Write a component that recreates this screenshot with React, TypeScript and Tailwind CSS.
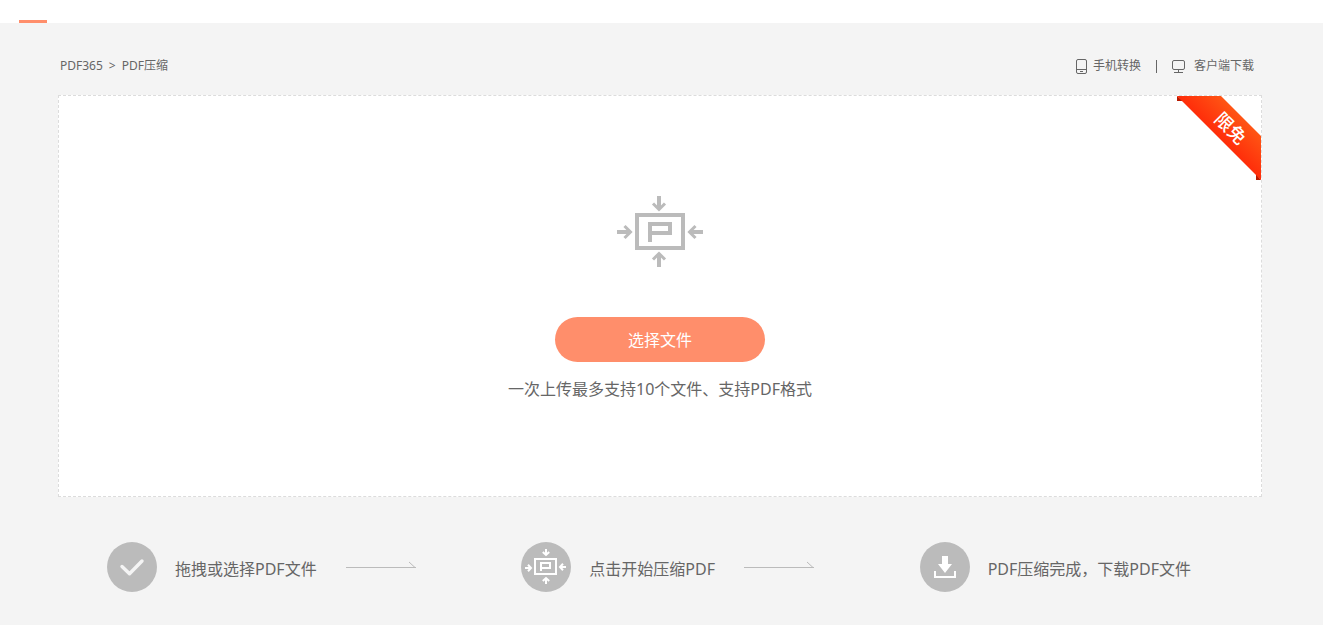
import type { ReactNode } from 'react';

function CompressIcon({ className }: { className: string }) {
  return (
    <svg viewBox="0 0 88 72" className={className} fill="none" stroke="currentColor" strokeWidth="4" aria-hidden="true">
      <rect x="21" y="19" width="46" height="33" />
      <path d="M34 46V28H54V37H36" />
      <path d="M43 0V12M43 71V59M1 36H13M87 36H75" />
      <path
        d="M37 7.500L43 13.500L49 7.500M37 63.500L43 57.500L49 63.500M8.500 30L14.500 36L8.500 42M79.500 30L73.500 36L79.500 42"
        strokeWidth="3"
      />
    </svg>
  );
}

function SmallCompressIcon() {
  return (
    <svg viewBox="0 0 50 50" className="size-[50px]" fill="none" stroke="#fff" strokeWidth="2" aria-hidden="true">
      <rect x="14" y="17" width="21" height="15" />
      <path d="M20 29V21H29V26H21" />
      <path d="M25 7V13M21.800 10L25 13L28.200 10" />
      <path d="M25 42V36M21.800 39L25 36L28.200 39" />
      <path d="M4 26H10M7 22.800L10 26L7 29.200" />
      <path d="M45 25H39M42 21.800L39 25L42 28.200" />
    </svg>
  );
}

function CheckIcon() {
  return (
    <svg viewBox="0 0 50 50" className="size-[50px]" fill="none" stroke="#f4f4f4" strokeWidth="3.400" aria-hidden="true">
      <path d="M15 24.500L22.500 31.800L35 19" strokeLinejoin="round" strokeLinecap="round" />
    </svg>
  );
}

function DownloadIcon() {
  return (
    <svg viewBox="0 0 50 50" className="size-[50px]" fill="#fff" aria-hidden="true">
      <path d="M22 14H28V22H32L25 31L18 22H22Z" />
      <path d="M14 29H16V34H34V29H36V36H14Z" />
    </svg>
  );
}

function Arrow() {
  return (
    <svg viewBox="0 0 70 12" className="h-3 w-[70px] shrink-0" fill="none" stroke="#bbb" aria-hidden="true">
      <path d="M0 6.500H70M63 1L69 6.500" />
    </svg>
  );
}

function Step({ icon, children }: { icon: ReactNode; children: ReactNode }) {
  return (
    <div className="flex items-center gap-[18px]">
      <span className="size-[50px] shrink-0 rounded-full bg-[#bbb]">{icon}</span>
      <span className="pt-1 whitespace-nowrap">{children}</span>
    </div>
  );
}

function Ribbon() {
  return (
    <div className="absolute top-0 right-0 size-[84px]">
      <svg viewBox="0 0 84 84" className="size-full" aria-hidden="true">
        <defs>
          <linearGradient id="ribbon" x1="42" y1="42" x2="64" y2="20" gradientUnits="userSpaceOnUse">
            <stop offset="0" stopColor="#ff2d0a" />
            <stop offset="1" stopColor="#ff5514" />
          </linearGradient>
        </defs>
        <path d="M0 0V5H6L0 0ZM79 78V84H84Z" fill="#b81a00" />
        <path d="M0 0H44L84 40V84Z" fill="url(#ribbon)" />
      </svg>
      <span className="absolute top-5 left-9 rotate-45 text-lg leading-6 font-medium whitespace-nowrap text-white">限免</span>
    </div>
  );
}

export default function App() {
  return (
    <div className="min-h-screen bg-[#f4f4f4] font-['Noto_Sans','Noto_Sans_CJK_SC',sans-serif] text-[#666]">
      <header className="flex h-[23px] items-end bg-white pl-[19px]">
        <span className="h-[3px] w-7 bg-[#ff8e6b]" />
      </header>
      <main className="pr-[61px] pl-[58px]">
        <div className="flex h-[72px] items-center justify-between pt-[14px] pr-2 pl-[2px] text-xs">
          <nav className="flex gap-[6px]">
            <a href="#home">PDF365</a>
            <span>&gt;</span>
            <a href="#compress">PDF压缩</a>
          </nav>
          <div className="flex items-center">
            <a href="#mobile" className="flex items-center gap-[6px]">
              <svg viewBox="0 0 11 15" className="h-[15px] w-[11px]" fill="none" stroke="currentColor" aria-hidden="true">
                <rect x=".5" y=".5" width="10" height="14" rx="1.500" />
                <path d="M.5 10.500H10.500M4 12.500H7" />
              </svg>
              手机转换
            </a>
            <span className="mr-[15px] ml-[15px] h-[13px] w-px bg-[#666]" />
            <a href="#client" className="flex items-center gap-[9px]">
              <svg viewBox="0 0 13 13" className="size-[13px]" fill="none" stroke="currentColor" aria-hidden="true">
                <rect x=".5" y=".5" width="12" height="9" rx="1.500" />
                <path d="M6.500 9.500V12M2 12.500H11" />
              </svg>
              客户端下载
            </a>
          </div>
        </div>
        <section className="relative flex flex-col items-center border border-dashed border-[#dcdcdc] bg-white pt-[100px] pb-[95px]">
          <Ribbon />
          <CompressIcon className="h-[72px] w-[88px] text-[#bbb]" />
          <button type="button" className="mt-[49px] h-[45px] w-[210px] rounded-full bg-[#ff8e6b] text-base text-white">
            选择文件
          </button>
          <p className="mt-[15px] text-base leading-6">一次上传最多支持10个文件、支持PDF格式</p>
        </section>
        <section className="flex items-center justify-between pt-[45px] pr-[71px] pb-8 pl-[49px] text-base">
          <div className="flex items-center gap-[29px]">
            <Step icon={<CheckIcon />}>拖拽或选择PDF文件</Step>
            <Arrow />
          </div>
          <div className="flex items-center gap-[29px]">
            <Step icon={<SmallCompressIcon />}>点击开始压缩PDF</Step>
            <Arrow />
          </div>
          <Step icon={<DownloadIcon />}>PDF压缩完成，下载PDF文件</Step>
        </section>
      </main>
    </div>
  );
}
